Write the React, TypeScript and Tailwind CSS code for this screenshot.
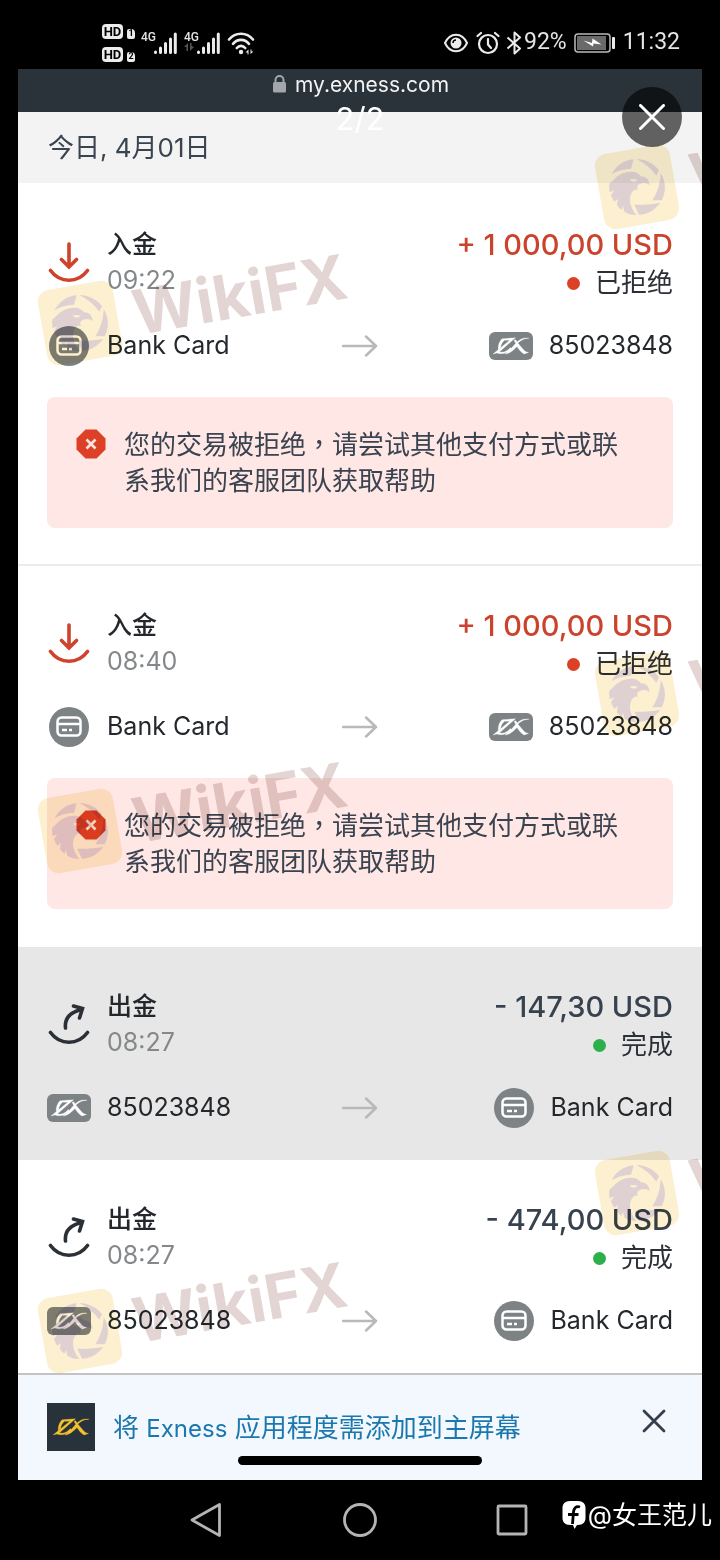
import { useState } from 'react';
import clsx from 'clsx';

type Side = { kind: 'bank' | 'account'; label: string };

type Transaction = {
  id: number;
  type: 'deposit' | 'withdrawal';
  time: string;
  amount: string;
  status: 'rejected' | 'done';
  from: Side;
  to: Side;
  highlighted?: boolean;
};

const BANK: Side = { kind: 'bank', label: 'Bank Card' };
const ACCOUNT: Side = { kind: 'account', label: '85023848' };

const TRANSACTIONS: Transaction[] = [
  { id: 1, type: 'deposit', time: '09:22', amount: '+ 1 000,00 USD', status: 'rejected', from: BANK, to: ACCOUNT },
  { id: 2, type: 'deposit', time: '08:40', amount: '+ 1 000,00 USD', status: 'rejected', from: BANK, to: ACCOUNT },
  { id: 3, type: 'withdrawal', time: '08:27', amount: '- 147,30 USD', status: 'done', from: ACCOUNT, to: BANK, highlighted: true },
  { id: 4, type: 'withdrawal', time: '08:27', amount: '- 474,00 USD', status: 'done', from: ACCOUNT, to: BANK },
];

function SignalBars({ muted }: { muted?: boolean }) {
  return (
    <div className="relative flex h-6 w-9 items-end justify-end">
      <span className="absolute top-0 left-0 font-['Roboto'] text-xs leading-3 font-medium">4G</span>
      {muted && (
        <svg viewBox="0 0 10 8" className="absolute bottom-1 left-0 h-2 w-2.5" fill="#555">
          <path d="M0 4 4 0v8H2.500V4zM6 0h1.500v3L10 4 6 8z" />
        </svg>
      )}
      <svg viewBox="0 0 24 24" className="h-6 w-6" stroke="#ececec" strokeWidth="3" strokeLinecap="round">
        <path d="M2.500 21v.5M7.500 17v4.500M12.500 12.500v9M17.500 8v13.500M22.300 3v18.500" />
      </svg>
    </div>
  );
}

function HdBadge({ sim }: { sim: string }) {
  return (
    <div className="flex items-end gap-1">
      <span className="flex h-[15px] w-[21px] items-center justify-center rounded-sm bg-[#ececec] text-[13px] leading-none font-bold text-black">
        HD
      </span>
      <span className="flex h-2.5 w-2 items-center justify-center rounded-[2px] rounded-tr-sm bg-[#ececec] text-[9px] leading-none font-bold text-black">
        {sim}
      </span>
    </div>
  );
}

function StatusBar() {
  return (
    <header className="flex h-[69px] items-center justify-between bg-black pt-4 pr-10 pl-[102px] font-['Roboto'] text-[#e4e4e4]">
      <div className="flex items-center">
        <div className="flex w-[39px] flex-col gap-2">
          <HdBadge sim="1" />
          <HdBadge sim="2" />
        </div>
        <div className="flex items-center gap-[7px]">
          <SignalBars />
          <SignalBars muted />
          <svg viewBox="0 0 28 24" className="h-6 w-7" fill="none" stroke="#ececec" strokeWidth="2.600" strokeLinecap="round">
            <path d="M2 8.500C8.500.8 19.500.8 26 8.500M6 12.800c4.500-5.200 11.500-5.200 16 0M9.800 17c2.400-2.800 6-2.800 8.400 0" />
            <circle cx="14" cy="21" r="2.200" fill="#ececec" stroke="none" />
            <path d="M18.500 21.500l3-3v5h-1v-2zM23.500 18.500v4.500l3-2.500h-2v-2z" fill="#ececec" stroke="none" />
          </svg>
        </div>
      </div>
      <div className="flex items-center text-[23px]">
        <svg viewBox="0 0 24 20" className="mr-2 h-5 w-6" fill="none" stroke="#ececec" strokeWidth="2">
          <path d="M1 10C6-1 18-1 23 10C18 21 6 21 1 10Z" strokeLinejoin="round" />
          <circle cx="12" cy="10" r="5.500" fill="#ececec" stroke="none" />
          <path d="M9 10a3 3 0 0 1 3-3" stroke="#000" strokeWidth="1.500" />
        </svg>
        <svg viewBox="0 0 24 24" className="mr-1.5 h-6 w-6" fill="none" stroke="#ececec" strokeWidth="2.200" strokeLinecap="round">
          <circle cx="12" cy="13" r="9" />
          <path d="M12 8v5.500l3 3.500M1.500 5 5 2M22.500 5 19 2" />
        </svg>
        <svg viewBox="0 0 16 24" className="mr-0.5 h-6 w-4" fill="none" stroke="#ececec" strokeWidth="2" strokeLinejoin="round">
          <path d="M1.500 6.500 14 17.500 8.500 22.500V1.500L14 6.500 1.500 17.500" />
        </svg>
        <span>92%</span>
        <svg viewBox="0 0 42 20" className="mx-[7px] h-5 w-[42px]">
          <rect x="1" y="1" width="35" height="18" rx="3" fill="none" stroke="#bbb" strokeWidth="1.500" />
          <rect x="3" y="3" width="29" height="14" fill="#6a6a6a" />
          <path d="M9.500 7.500 18 10l.5-4.500 9 6-8-1-.5 3z" fill="#fff" />
          <rect x="38" y="4" width="3" height="12" rx="1" fill="#ececec" />
        </svg>
        <time>11:32</time>
      </div>
    </header>
  );
}

function ExMark({ className }: { className?: string }) {
  return (
    <svg viewBox="0 0 36 18" className={className} fill="currentColor" stroke="currentColor" strokeWidth=".3">
      <path d="M9 1.800 22.500.8 6.500 14.800C9 15.600 12 15 14.500 13.200L17.500 10.500 18.500 12C15 16.500 8 17.600 3.800 16L0 17 16.800 3.200H11.500C9 5.500 7.800 8 7.600 10.500L5.200 12.500C5 8.300 6.400 4.300 9 1.800Z" />
      <path d="M36 1.200C30.500 1.500 27 3.500 23.500 7.500L21.500 4.200C20.700 3 22.200 2.200 23 3.200L25.200 6.500 29.500 11.500C31 13.500 33 15.200 35.500 15.500L31 17C28 15.500 26 12.500 24 9.500 20 13.500 16.500 16.800 12 17 16.500 14 20 9.500 23 6 26.500 2.200 31 .2 36 1.200Z" />
    </svg>
  );
}

function SideIcon({ kind }: { kind: Side['kind'] }) {
  if (kind === 'account') {
    return (
      <span className="flex h-7 w-11 items-center justify-center rounded-md bg-[#7d8385]">
        <ExMark className="h-[18px] w-9 text-white" />
      </span>
    );
  }
  return (
    <span className="flex size-10 items-center justify-center rounded-full bg-[#7d8284]">
      <svg viewBox="0 0 26 22" className="h-[22px] w-[26px]" fill="none" stroke="#fff" strokeWidth="2.500">
        <rect x="1.500" y="1.500" width="23" height="18" rx="4" />
        <path d="M2 8h22M6 14h5M13 14h3" />
      </svg>
    </span>
  );
}

function TypeIcon({ type }: { type: Transaction['type'] }) {
  return (
    <svg
      viewBox="0 0 42 42"
      className={clsx('mt-4 size-[42px]', type === 'deposit' ? 'text-[#cf432c]' : 'text-[#2b3036]')}
      fill="none"
      stroke="currentColor"
      strokeWidth="3.600"
      strokeLinecap="round"
    >
      {type === 'deposit' ? (
        <path d="M21 2v22M13.500 17.500 21 25l7.500-7.500" />
      ) : (
        <path d="M17.500 24C16.500 15 21 8.500 33.500 5.500M25.500 2 34.500 4.500 31.500 14" />
      )}
      <path d="M2.500 28.500C12 41.500 30 41.500 39.500 28.500" />
    </svg>
  );
}

function TransactionCard({ tx, divider }: { tx: Transaction; divider: boolean }) {
  const rejected = tx.status === 'rejected';
  return (
    <li
      className={clsx(
        'px-[29px] pt-[41px]',
        tx.highlighted ? 'bg-[#e7e7e7]' : 'bg-white',
        rejected ? 'border-b-2 pb-9' : 'pb-8',
        rejected && (divider ? 'border-[#ececec]' : 'border-white'),
      )}
    >
      <div className="flex items-start gap-4">
        <span className="flex w-11 justify-center">
          <TypeIcon type={tx.type} />
        </span>
        <div className="flex-1 text-[25px] leading-9">
          <h2 className="font-medium text-[#24282c]">{tx.type === 'deposit' ? '入金' : '出金'}</h2>
          <time className="block text-[#85888a]">{tx.time}</time>
        </div>
        <div className="text-right">
          <p className={clsx('text-[29px] leading-[38px] font-medium', rejected ? 'text-[#cb432d]' : 'text-[#37424e]')}>
            {tx.amount}
          </p>
          <p className="flex items-center justify-end gap-[15px] text-[26px] leading-[38px] text-[#2b3036]">
            <span className={clsx('size-[13px] rounded-full', rejected ? 'bg-[#dc4026]' : 'bg-[#2cb04a]')} />
            {rejected ? '已拒绝' : '完成'}
          </p>
        </div>
      </div>

      <div className="mt-6 grid h-10 grid-cols-[1fr_auto_1fr] items-center text-[25px] text-[#24282c]">
        <div className="flex items-center gap-4">
          <span className="flex w-11 justify-center">
            <SideIcon kind={tx.from.kind} />
          </span>
          {tx.from.label}
        </div>
        <svg viewBox="0 0 36 24" className="h-6 w-9" fill="none" stroke="#b9b9b9" strokeWidth="2.500" strokeLinecap="round" strokeLinejoin="round">
          <path d="M1 12h33M24 2.500 34 12 24 21.500" />
        </svg>
        <div className="flex items-center justify-end gap-4">
          <SideIcon kind={tx.to.kind} />
          {tx.to.label}
        </div>
      </div>

      {rejected && (
        <div className="mt-[31px] flex gap-[18px] rounded-lg bg-[#fee7e5] pt-[30px] pr-11 pb-[29px] pl-[29px]">
          <svg viewBox="0 0 30 30" className="mt-0.5 size-[30px] shrink-0">
            <path d="M9.500.5h11l9 9v11l-9 9h-11l-9-9v-11z" fill="#dc4026" />
            <path d="M10.500 10.500 19.500 19.500M19.500 10.500 10.500 19.500" stroke="#fde5e0" strokeWidth="2.600" />
          </svg>
          <p className="font-['Inter','Noto_Sans_CJK_TC',sans-serif] text-[26px] leading-9 text-[#3a4350]">
            您的交易被拒绝，请尝试其他支付方式或联系我们的客服团队获取帮助
          </p>
        </div>
      )}
    </li>
  );
}

function Watermark({ className }: { className: string }) {
  return (
    <div className={clsx('absolute flex origin-[38px_38px] -rotate-10 items-center gap-4', className)}>
      <span className="flex size-[76px] shrink-0 items-center justify-center rounded-xl bg-[#fcf0d0]">
        <svg viewBox="0 0 168 168" className="size-14 rotate-10" fill="#dfd1d2">
          <path d="M8 46C20 22 42 4 74 1L66 29C44 30 26 34 8 46Z" />
          <path d="M82 0C108 0 134 12 150 34L142 50C126 28 106 12 82 0Z" />
          <path d="M155 42C172 70 171 98 158 124L130 124C146 100 154 72 155 42Z" />
          <path d="M76 137C102 138 130 136 154 131C138 154 112 167 90 167Z" />
          {/* Eagle head, hooked beak and feathers */}
          <path d="M14 62C28 46 46 38 66 38C82 38 90 44 96 52C110 52 120 60 122 78C114 72 104 70 94 74C84 78 82 84 88 92C78 90 70 96 66 106C60 120 62 144 82 168C66 168 56 164 46 158L42 140L38 152C30 148 26 142 24 138L26 120L16 128C10 120 8 114 6 108L16 94L2 100C0 86 0 78 1 74Z" />
          <path d="M62 62C68 58 78 60 86 62C80 69 70 70 62 62Z" fill="#fcf0d0" />
        </svg>
      </span>
      <span className="text-[62px] leading-none font-bold text-[#e2d5d4]">WikiFX</span>
    </div>
  );
}

export default function App() {
  const [bannerOpen, setBannerOpen] = useState(true);

  return (
    <div className="flex min-h-screen flex-col bg-black font-['Inter','Noto_Sans_CJK_SC',sans-serif]">
      <StatusBar />

      <main className="relative mx-[18px] flex flex-1 flex-col bg-white">
        <div className="flex h-[43px] items-start justify-center gap-2 bg-[#2a323a] text-[21px] leading-[31px] text-[#f1f3f4]">
          <svg viewBox="0 0 16 20" className="mt-[5px] h-5 w-4">
            <rect x="2" y="8" width="13" height="10.500" rx="1.500" fill="#a3a6ad" />
            <path d="M4.500 9V6a4 4 0 0 1 8 0v3" fill="none" stroke="#a3a6ad" strokeWidth="2" />
          </svg>
          my.exness.com
        </div>

        <h1 className="mb-0.5 h-[71px] bg-[#f3f3f3] pl-[30px] text-[26px] leading-[71px] text-[#3a4350]">今日, 4月01日</h1>

        <ul>
          {TRANSACTIONS.map((tx, i) => (
            <TransactionCard key={tx.id} tx={tx} divider={!TRANSACTIONS[i + 1]?.highlighted} />
          ))}
        </ul>

        {bannerOpen && (
          <aside className="flex flex-1 flex-col border-t-2 border-[#c3c3c6] bg-[#f3f8fe] px-[29px] pt-7 pb-[15px]">
            <div className="flex items-center gap-[18px]">
              <span className="flex size-12 items-center justify-center bg-[#28323b]">
                <ExMark className="h-[18px] w-9 text-[#f5c22e]" />
              </span>
              <a href="#install" className="flex-1 text-[26px] text-[#1b78ae]">
                将 <span className="text-2xl">Exness</span> 应用程度需添加到主屏幕
              </a>
              <button aria-label="关闭" onClick={() => setBannerOpen(false)} className="mr-[7px] mb-3">
                <svg viewBox="0 0 24 24" className="size-6" stroke="#333f4c" strokeWidth="2.800" strokeLinecap="round">
                  <path d="M2 2 22 22M22 2 2 22" />
                </svg>
              </button>
            </div>
            <div className="mx-auto mt-auto h-[9px] w-[244px] rounded-full bg-black" />
          </aside>
        )}

        {/* Watermark layer */}
        <div aria-hidden="true" className="pointer-events-none absolute inset-0 overflow-hidden mix-blend-multiply">
          <Watermark className="top-[80px] left-[581px]" />
          <Watermark className="top-[216px] left-[24px]" />
          <Watermark className="top-[587px] left-[581px]" />
          <Watermark className="top-[724px] left-[24px]" />
          <Watermark className="top-[1086px] left-[581px]" />
          <Watermark className="top-[1224px] left-[24px]" />
        </div>

        {/* Photo viewer controls */}
        <p className="absolute top-8 left-1/2 -translate-x-1/2 text-[31px] leading-9 text-white">2/2</p>
        <button aria-label="关闭图片" className="absolute top-[18px] right-5 flex size-[60px] items-center justify-center rounded-full bg-black/60">
          <svg viewBox="0 0 26 26" className="size-[26px]" stroke="#fff" strokeWidth="3" strokeLinecap="round">
            <path d="M1.500 1.500 24.500 24.500M24.500 1.500 1.500 24.500" />
          </svg>
        </button>
      </main>

      <nav className="relative flex h-20 items-center justify-center gap-[119px] bg-black">
        <button aria-label="返回">
          <svg viewBox="0 0 34 36" className="h-9 w-[34px]" fill="none" stroke="#b4b4b4" strokeWidth="2.800" strokeLinejoin="round">
            <path d="M29.500 2.500V33.500L2 18Z" />
          </svg>
        </button>
        <button aria-label="主页">
          <svg viewBox="0 0 34 36" className="h-9 w-[34px]" fill="none" stroke="#b4b4b4" strokeWidth="2.800">
            <circle cx="17" cy="18" r="15.500" />
          </svg>
        </button>
        <button aria-label="最近任务">
          <svg viewBox="0 0 34 36" className="h-9 w-[34px]" fill="none" stroke="#b4b4b4" strokeWidth="2.800">
            <rect x="2" y="4" width="28" height="28" rx="1" />
          </svg>
        </button>
        <div className="absolute top-[17px] right-2 flex items-center gap-0.5 text-[25px] leading-9 text-white">
          <svg viewBox="0 0 24 28" className="h-7 w-6">
            <path d="M8 0h8c5 0 7.500 3 7.500 7v10c0 4-2.500 7-7.500 7h-1L12.500 28 11 24H8c-5 0-7.500-3-7.500-7V7c0-4 2.500-7 7.500-7Z" fill="#fff" />
            <path d="M18 6c-4-1.500-6 1-6.500 5L10.500 23M6 13.500h10.500" fill="none" stroke="#000" strokeWidth="2.800" />
          </svg>
          <span>@女王范儿</span>
        </div>
      </nav>
    </div>
  );
}
